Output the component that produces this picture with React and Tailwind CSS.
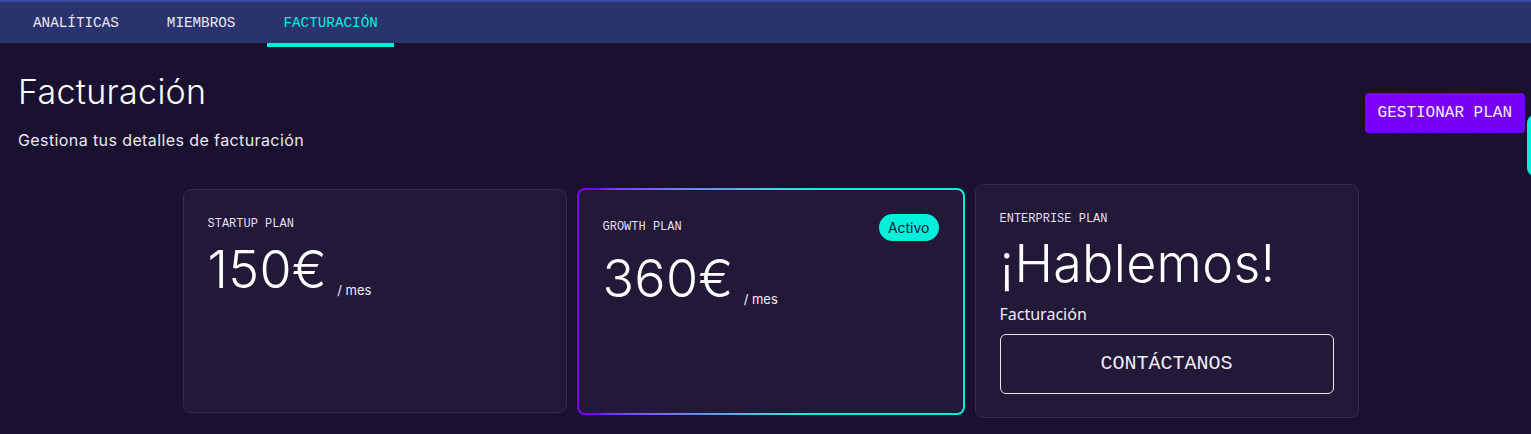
const tabs = ["ANALÍTICAS", "MIEMBROS", "FACTURACIÓN"];

const mono = { fontFamily: '"Liberation Mono", "DejaVu Sans Mono", monospace' };

const Price = ({ amount }) => (
  <div className="flex items-end gap-[10px] mt-[8px]">
    <span className="text-[52px] font-light leading-[60px] text-white tracking-[0.3px]">{amount}</span>
    <span className="text-[13px] leading-[20px] text-[#f1ecf8] mb-[0px]">/ mes</span>
  </div>
);

export default function App() {
  return (
    <div
      className="relative w-[1531px] h-[434px] overflow-hidden bg-[#1a1030] text-white"
      style={{ fontFamily: 'Inter, "Noto Sans", sans-serif' }}
    >
      {/* Tabs */}
      <nav className="flex h-[43px] gap-4 border-t-2 border-[#3b4a9c] bg-[#29336e] pl-[17px]">
        {tabs.map((t) => {
          const active = t === "FACTURACIÓN";
          return (
            <div key={t} className="relative flex items-center px-4 pt-[3px]">
              <span
                className={`text-[14.3px] ${active ? "text-[#00f0dc]" : "text-[#ece6f4]"}`}
                style={mono}
              >
                {t}
              </span>
              {active && <div className="absolute left-0 right-0 -bottom-[4px] h-[4px] bg-[#00f0dc]"></div>}
            </div>
          );
        })}
      </nav>

      {/* Header */}
      <div className="flex items-center justify-between pl-[18px] pr-[6px] pt-[29px]">
        <div>
          <h1 className="text-[34px] font-light leading-[40px] tracking-[0.3px] text-white">Facturación</h1>
          <p className="mt-[16px] text-[16px] leading-[24px] tracking-[0.4px] text-[#ece6f4]">
            Gestiona tus detalles de facturación
          </p>
        </div>
        <button
          className="mt-[2px] h-[40px] rounded-[4px] bg-gradient-to-br from-[#8000ff] to-[#7000ee] px-[13px] text-[16px] text-[#f5eeff]"
          style={mono}
        >
          GESTIONAR PLAN
        </button>
      </div>

      {/* Plans */}
      <div className="mt-[32px] flex items-center justify-center gap-[10px] pl-[10px]">
        {/* Startup */}
        <div className="h-[224px] w-[384px] rounded-lg border border-[#2f2b55] bg-[#221837] px-[24px] pt-[26px]">
          <div className="text-[12px] leading-[16px] text-[#e4dff0]" style={mono}>STARTUP PLAN</div>
          <Price amount="150€" />
        </div>

        {/* Growth (active) */}
        <div className="h-[227px] w-[388px] rounded-lg bg-gradient-to-r from-[#7a00ff] from-5% via-[#5fa7e6] via-40% to-[#00f0dc] to-60% p-[2px]">
          <div className="h-full rounded-[6px] bg-[#221837] px-[24px] pt-[24px]">
            <div className="flex items-center justify-between">
              <span className="text-[12px] leading-[16px] text-[#e4dff0]" style={mono}>GROWTH PLAN</span>
              <span className="rounded-full bg-[#00f0dc] px-[9px] text-[14px] leading-[27px] text-[#1a1030]">Activo</span>
            </div>
            <Price amount="360€" />
          </div>
        </div>

        {/* Enterprise */}
        <div className="h-[234px] w-[384px] rounded-lg border border-[#2f2b55] bg-[#221837] px-[24px] pt-[26px]">
          <div className="text-[12px] leading-[16px] text-[#e4dff0]" style={mono}>ENTERPRISE PLAN</div>
          <div className="mt-[7px] text-[52px] font-light leading-[60px] tracking-[0.3px] text-white">¡Hablemos!</div>
          <div className="mt-[8px] text-[16px] leading-[24px] text-[#f1ecf8]" style={{ fontFamily: '"Noto Sans", sans-serif' }}>
            Facturación
          </div>
          <button
            className="mt-[8px] flex h-[60px] w-full items-center justify-center rounded-[6px] border border-[#e8e4f0] text-[20px] text-[#f1ecf8]"
            style={mono}
          >
            CONTÁCTANOS
          </button>
        </div>
      </div>

      {/* floating widget edge */}
      <div className="absolute left-[1527px] top-[115px] h-[61px] w-[24px] rounded-lg bg-[#00f0dc]"></div>
    </div>
  );
}
